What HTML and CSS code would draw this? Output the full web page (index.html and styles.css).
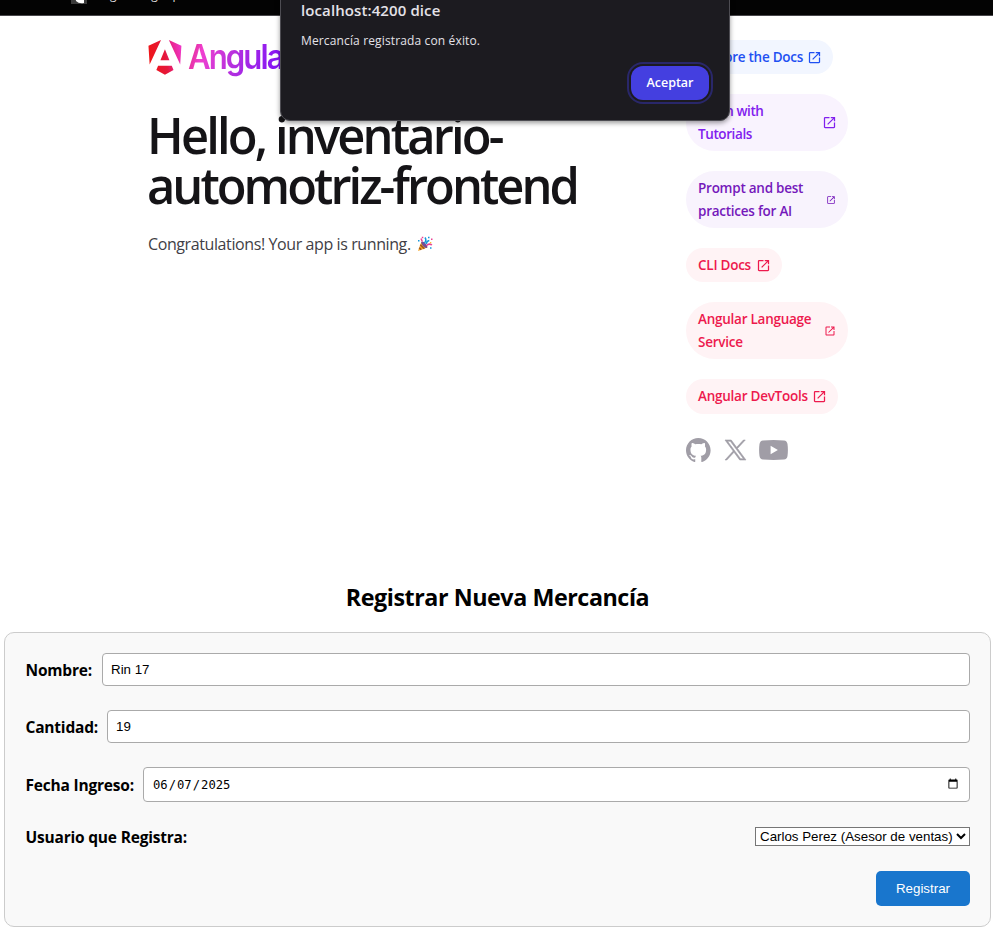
FILE: index.html
```html
<!DOCTYPE html>
<html lang="es">
<head>
<meta charset="utf-8">
<title>Inventario Automotriz</title>
<link rel="stylesheet" href="styles.css">
</head>
<body>
<svg class="defs" aria-hidden="true">
  <symbol id="ext" viewBox="0 -960 960 960"><path d="M200-120q-33 0-56.5-23.5T120-200v-560q0-33 23.5-56.5T200-840h280v80H200v560h560v-280h80v280q0 33-23.5 56.5T760-120H200Zm188-212-56-56 372-372H560v-80h280v280h-80v-144L388-332Z"/></symbol>
</svg>
<div class="browser-bar"><span class="favicon"><svg viewBox="0 0 16 16"><path d="M4 0h9v9q-5 1-8-2z" fill="#fff"/></svg></span><span class="bookmark">Angular Signup</span></div>
<main class="main">
  <section class="left">
    <div class="logo">
      <svg viewBox="0 0 223 236" width="34" height="35">
        <defs>
          <linearGradient id="lg" x1="0" y1="0.55" x2="1" y2="0.35"><stop offset="0" stop-color="#f01616"/><stop offset=".5" stop-color="#e5173b"/><stop offset=".72" stop-color="#e82384"/><stop offset="1" stop-color="#ef35c4"/></linearGradient>
        </defs>
        <path fill="url(#lg)" d="m222.077 39.192-8.019 125.923L137.387 0l84.69 39.192Zm-53.105 162.825-57.933 33.056-57.934-33.056 11.783-28.556h92.301l11.783 28.556ZM111.039 62.675l30.357 73.803H80.681l30.358-73.803ZM7.937 165.115 0 39.192 84.69 0 7.937 165.115Z"/>
      </svg>
      <span class="wordmark">Angular</span>
    </div>
    <h1>Hello, inventario-<br><span class="line2">automotriz-frontend</span></h1>
    <p class="congrats"><span>Congratulations! Your app is running.</span>
      <svg class="party" viewBox="0 0 16 16" width="16" height="16"><path d="M1 15 4.3 6Q9 6 10.3 11.6Z" fill="#f5a623"/><path d="m3.3 8.8 4 4M2.2 11.8l2 2" stroke="#9d5525" stroke-width="1.6"/><ellipse cx="7.3" cy="8.8" rx="1.7" ry="4" transform="rotate(-43 7.3 8.8)" fill="#744d9a"/><path d="M7.3 7Q10 4.5 8 1.5M9.3 8Q9.7 5 12.3 4.6" stroke="#1598dc" stroke-width="1.5" fill="none"/><path d="M9.5 9.5Q12 7 15 9M5.3 5.5 4 2.5" stroke="#e94395" stroke-width="1.5" fill="none"/><path d="M11 .7h1.5v1.5H11zM1 4h1.5v1.5H1zM13 11.2h1.5v1.5H13z" fill="#1598dc"/><path d="M4.8.7h1.5v1.5H4.8zM14 2.6h1.5v1.5H14z" fill="#e94395"/><path d="M13 6h1.3v1.3H13z" fill="#fbc52c"/></svg>
    </p>
  </section>
  <aside class="right">
    <a class="pill blue"><span>Explore the Docs</span><svg><use href="#ext"/></svg></a>
    <a class="pill violet wide"><span>Learn with<br>Tutorials</span><svg><use href="#ext"/></svg></a>
    <a class="pill purple wide small"><span>Prompt and best<br>practices for AI</span><svg><use href="#ext"/></svg></a>
    <a class="pill red cli"><span>CLI Docs</span><svg><use href="#ext"/></svg></a>
    <a class="pill red wide medium"><span>Angular Language<br>Service</span><svg><use href="#ext"/></svg></a>
    <a class="pill red dev"><span>Angular DevTools</span><svg><use href="#ext"/></svg></a>
    <div class="social">
      <svg width="25" height="24" viewBox="0 0 25 24"><path d="M12.3047 0C5.50634 0 0 5.50942 0 12.3047C0 17.7423 3.52529 22.3535 8.41332 23.9787C9.02856 24.0946 9.25414 23.7142 9.25414 23.3871C9.25414 23.0949 9.24389 22.3207 9.23876 21.2953C5.81601 22.0377 5.09414 19.6444 5.09414 19.6444C4.53427 18.2243 3.72524 17.8449 3.72524 17.8449C2.61064 17.082 3.81137 17.0973 3.81137 17.0973C5.04697 17.1835 5.69604 18.3647 5.69604 18.3647C6.79321 20.2463 8.57636 19.7029 9.27978 19.3881C9.39052 18.5924 9.70736 18.0499 10.0591 17.7423C7.32641 17.4347 4.45429 16.3765 4.45429 11.6618C4.45429 10.3185 4.9311 9.22133 5.72065 8.36C5.58222 8.04931 5.16694 6.79833 5.82831 5.10337C5.82831 5.10337 6.85883 4.77319 9.2121 6.36459C10.1965 6.09082 11.2424 5.95546 12.2883 5.94931C13.3342 5.95546 14.3801 6.09082 15.3644 6.36459C17.7023 4.77319 18.7328 5.10337 18.7328 5.10337C19.3942 6.79833 18.9789 8.04931 18.8559 8.36C19.6403 9.22133 20.1171 10.3185 20.1171 11.6618C20.1171 16.3888 17.2409 17.4296 14.5031 17.7321C14.9338 18.1012 15.3337 18.8559 15.3337 20.0084C15.3337 21.6552 15.3183 22.978 15.3183 23.3779C15.3183 23.7009 15.5336 24.0854 16.1642 23.9623C21.0871 22.3484 24.6094 17.7341 24.6094 12.3047C24.6094 5.50942 19.0999 0 12.3047 0Z"/></svg>
      <svg class="x" width="21" height="20" viewBox="0 0 24 24" preserveAspectRatio="none"><path d="M14.258 10.152L23.176 0h-2.113l-7.747 8.813L7.133 0H0l9.352 13.328L0 23.973h2.113l8.176-9.309 6.531 9.309h7.133zM11.363 13.445l-.949-1.328L2.875 1.56h3.246l6.086 8.523.945 1.328 7.91 11.078h-3.246z"/></svg>
      <svg width="29" height="20" viewBox="0 0 29 20"><path fill-rule="evenodd" d="M4 .4Q14.500-.4 25 .4 28 .7 28.500 4 29.300 10 28.500 16 28 19.300 25 19.600 14.500 20.400 4 19.600 1 19.300.5 16-.3 10 .5 4 1 .7 4 .4ZM11.600 5.800v8.400L18.900 10Z"/></svg>
    </div>
  </aside>
</main>
<section class="register">
  <h2>Registrar Nueva Mercancía</h2>
  <form>
    <div class="row"><label class="l1">Nombre:</label><input type="text" value="Rin 17"></div>
    <div class="row"><label class="l2">Cantidad:</label><input type="text" value="19"></div>
    <div class="row date"><label class="l3">Fecha Ingreso:</label><input type="date" value="2025-06-07"></div>
    <div class="row user"><label class="l4">Usuario que Registra:</label><select><option>Carlos Perez (Asesor de ventas)</option></select></div>
    <button type="button" class="submit">Registrar</button>
  </form>
</section>
<div class="dialog" role="alertdialog">
  <strong>localhost:4200 dice</strong>
  <p>Mercancía registrada con éxito.</p>
  <button type="button">Aceptar</button>
</div>
</body>
</html>
```
FILE: styles.css
```css
* { box-sizing: border-box; }
body { margin: 0; height: 932px; overflow: hidden; background: #fff; color: #000; font-family: "Open Sans", "Noto Sans", sans-serif; }
.defs { position: absolute; width: 0; height: 0; }
.browser-bar { height: 16px; background: #030303; border-bottom: 1px solid #47464a; padding-left: 71px; display: flex; gap: 8px; overflow: hidden; color: #ddd; font-size: 12px; }
.favicon { width: 16px; height: 4px; background: #3b3b3b; overflow: hidden; }
.favicon svg { display: block; width: 16px; height: 16px; margin-top: -6px; }
.bookmark { line-height: 16px; margin-top: -13px; }
.main { width: 700px; height: 549px; margin-left: 148px; padding-top: 24px; display: flex; justify-content: space-between; }
.left { width: 500px; }
.logo { display: flex; height: 35px; gap: 6px; }
.wordmark { font: 600 33.500px/35px Inter, sans-serif; letter-spacing: -2.100px; transform: scaleX(.93); transform-origin: 0 0; background: linear-gradient(105deg, #dd2478 0, #f040d0 14%, #b02ee0 45%, #8514f5 80%); -webkit-background-clip: text; background-clip: text; color: transparent; height: 40px; padding-right: 4px; }
h1 { margin: 35px 0 0 -1px; font-size: 50px; line-height: 50px; font-weight: 600; letter-spacing: -2.900px; color: #151417; white-space: nowrap; transform: scaleX(.977); transform-origin: 0 0; }
.line2 { letter-spacing: -3.050px; }
.congrats { margin: 22px 0 0; display: flex; align-items: center; gap: 6px; height: 24px; font-size: 16px; color: #3f3e45; letter-spacing: -.4px; white-space: nowrap; }
.right { width: 162px; display: flex; flex-direction: column; align-items: flex-start; gap: 20px; }
.pill { display: flex; align-items: center; padding: 6px 12px; border-radius: 44px; font-size: 13.500px; line-height: 22.900px; font-weight: 600; letter-spacing: -.25px; white-space: nowrap; width: 147px; height: 34.400px; justify-content: space-between; }
.pill svg { width: 15px; height: 15px; flex: none; margin-right: -.5px; fill: currentColor; }
.pill.wide { width: 162px; height: 56.800px; }
.pill.small svg { width: 10px; height: 10px; margin-right: 0; }
.pill.medium svg { width: 12px; height: 12px; margin-right: 0; }
.pill.cli { width: 96px; }
.pill.dev { width: 152px; }
.blue { color: #1f50f2; background: #f2f6ff; }
.violet { color: #8120ee; background: #f9f3fe; }
.violet span { letter-spacing: -.4px; }
.purple { color: #7519bb; background: #f8f3fd; }
.red { color: #ed194d; background: #fff3f5; }
.social { display: flex; align-items: center; gap: 13px; margin-top: 4px; fill: #a09da6; }
.social .x { margin-left: 1px; stroke: #a09da6; stroke-width: .7; overflow: visible; }
h2 { margin: 0; height: 67px; padding-top: 16px; text-align: center; font-size: 23.300px; line-height: 32px; font-weight: 700; letter-spacing: -.45px; padding-left: 2px; }
form { margin: 0 2px 0 4px; height: 295px; padding: 20px; border: 1px solid #ccc; border-radius: 10px; background: #f9f9f9; display: flex; flex-direction: column; }
.row { display: flex; align-items: center; gap: 10px; margin-bottom: 24px; height: 33px; }
label { font-weight: 700; font-size: 15.500px; line-height: 22px; letter-spacing: -.2px; white-space: nowrap; padding-left: .5px; }
.l1 { width: 67px; } .l2 { width: 72px; } .l3 { width: 108px; }
.row input { flex: 1; min-width: 0; height: 33px; padding: 8px; border: 1px solid #aaa; border-radius: 4px; background: #fff; color: #000; font: 13.333px "Liberation Sans", Arial, sans-serif; }
.row.date { height: 35px; margin-bottom: 25px; }
.row.date input { height: 35px; font: 12.200px "DejaVu Sans Mono", monospace; }
.row.user { height: 19px; margin-bottom: 25px; justify-content: space-between; }
select { width: 215px; height: 19px; font: 13.333px "Liberation Sans", Arial, sans-serif; color: #000; background: #fff; border: 1px solid #767676; border-radius: 0; }
.submit { align-self: flex-end; width: 94px; height: 35px; border: 0; border-radius: 5px; background: #1976cd; color: #fff; font: 13.333px "Liberation Sans", Arial, sans-serif; }
.dialog { position: absolute; left: 280px; top: -10px; width: 450px; height: 131px; padding: 9px 17px 0 20px; background: #1c1b20; border: 1px solid #4d4c52; border-radius: 0 0 10px 10px; box-shadow: 0 2px 5px rgba(0,0,0,.4); color: #e4e2e8; display: flex; flex-direction: column; }
.dialog strong { font-size: 15px; line-height: 20px; font-weight: 600; letter-spacing: .1px; }
.dialog p { margin: 12px 0 0; font-size: 12px; line-height: 18px; letter-spacing: .14px; }
.dialog button { align-self: flex-end; margin: 16px 3px 0 0; width: 78px; height: 34px; border: 0; border-radius: 12px; background: #443fe0; color: #fff; font: 600 12.500px/34px "Open Sans", sans-serif; outline: 2px solid #29276a; outline-offset: 2px; padding: 0; }
```
